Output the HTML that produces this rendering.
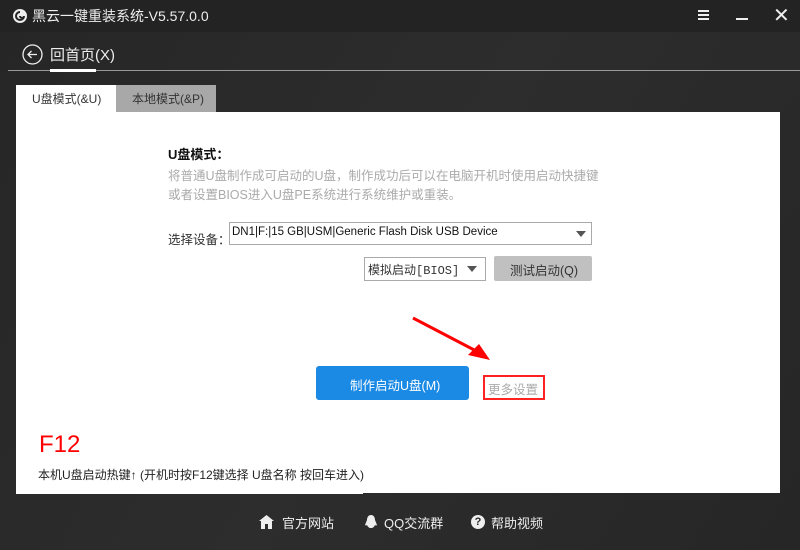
<!DOCTYPE html>
<html><head><meta charset="utf-8"><style>
*{margin:0;padding:0;box-sizing:border-box}
body{width:800px;height:550px;overflow:hidden;background:#2a2a2a;font-family:"Liberation Sans","Noto Sans CJK SC",sans-serif;position:relative;color:#333}
.a{position:absolute}
.t{font-size:13px;white-space:nowrap}
</style></head><body>
<div class="a" style="left:0;top:0;width:800px;height:550px;background:linear-gradient(120deg,#262626 0%,#2d2d2d 50%,#262626 100%)"></div>
<div class="a" style="left:0;top:0;width:800px;height:32px;background:#232323"></div>
<svg class="a" style="left:12px;top:8px" width="16" height="16" viewBox="0 0 16 16"><circle cx="8" cy="8" r="7" fill="#eee"/><path d="M8 4a4 4 0 1 0 4 4 2 2 0 0 1-4 0" fill="none" stroke="#232323" stroke-width="2"/></svg>
<div class="a t" style="left:32px;top:6px;color:#eee;font-size:14px">黑云一键重装系统-V5.57.0.0</div>
<div class="a" style="left:698px;top:10px;width:11px;height:2px;background:#eee;box-shadow:0 4px 0 #eee,0 8px 0 #eee"></div>
<div class="a" style="left:736px;top:18px;width:12px;height:2px;background:#eee"></div>
<div class="a t" style="left:773px;top:3px;color:#eee;font-size:20px">✕</div>
<svg class="a" style="left:22px;top:44px" width="21" height="21" viewBox="0 0 21 21"><circle cx="10.5" cy="10.5" r="9.5" fill="none" stroke="#eee" stroke-width="1.3"/><path d="M15 10.5H6M9.5 7L6 10.5 9.5 14" fill="none" stroke="#eee" stroke-width="1.3"/></svg>
<div class="a t" style="left:50px;top:44px;color:#eee;font-size:15px">回首页(X)</div>
<div class="a" style="left:8px;top:70px;width:792px;height:1px;background:#999"></div>
<div class="a" style="left:50px;top:69px;width:46px;height:3px;background:#fff"></div>
<div class="a" style="left:16px;top:85px;width:100px;height:28px;background:#fff"></div>
<div class="a t" style="left:32px;top:90px;font-size:12px">U盘模式(&amp;U)</div>
<div class="a" style="left:116px;top:85px;width:100px;height:27px;background:#a8a8a8"></div>
<div class="a t" style="left:132px;top:90px;font-size:12px">本地模式(&amp;P)</div>
<div class="a" style="left:16px;top:112px;width:764px;height:381px;background:#fff"></div>
<div class="a" style="left:16px;top:490px;width:347px;height:4px;background:#fff"></div>
<div class="a t" style="left:168px;top:144px;font-weight:bold;color:#111">U盘模式：</div>
<div class="a t" style="left:168px;top:167px;color:#aaa;font-size:12.5px;line-height:19px">将普通U盘制作成可启动的U盘，制作成功后可以在电脑开机时使用启动快捷键<br>或者设置BIOS进入U盘PE系统进行系统维护或重装。</div>
<div class="a t" style="left:168px;top:229px;font-size:12.5px">选择设备：</div>
<div class="a" style="left:229px;top:222px;width:363px;height:23px;border:1px solid #aaa"></div>
<div class="a t" style="left:232px;top:226px;font-size:11.5px;color:#111">DN1|F:|15 GB|USM|Generic Flash Disk USB Device</div>
<div class="a" style="left:576px;top:231px;border:5px solid transparent;border-top:6px solid #555"></div>
<div class="a" style="left:364px;top:257px;width:122px;height:24px;border:1px solid #aaa"></div>
<div class="a t" style="left:368px;top:261px;font-size:12px;font-family:'Liberation Mono','Noto Sans CJK SC',monospace">模拟启动[BIOS]</div>
<div class="a" style="left:467px;top:266px;border:5px solid transparent;border-top:6px solid #555"></div>
<div class="a" style="left:494px;top:256px;width:98px;height:25px;background:#c0c0c0;border-radius:2px"></div>
<div class="a t" style="left:510px;top:260px;font-size:12.5px">测试启动(Q)</div>
<svg class="a" style="left:410px;top:315px" width="90" height="50" viewBox="0 0 90 50"><path d="M3 3L70 38" stroke="#f00" stroke-width="3"/><path d="M80 45L58 40 69 29Z" fill="#f00"/></svg>
<div class="a" style="left:316px;top:366px;width:153px;height:34px;background:#1a8ae5;border-radius:3px"></div>
<div class="a t" style="left:350px;top:375px;color:#fff;font-size:12.5px">制作启动U盘(M)</div>
<div class="a" style="left:483px;top:375px;width:62px;height:25px;border:2px solid #f22"></div>
<div class="a t" style="left:488px;top:379px;color:#aaa;font-size:12.5px">更多设置</div>
<div class="a t" style="left:39px;top:431px;color:#f00;font-size:24px">F12</div>
<div class="a t" style="left:38px;top:466px;font-size:12px;color:#222">本机U盘启动热键↑ (开机时按F12键选择 U盘名称 按回车进入)</div>
<svg class="a" style="left:259px;top:515px" width="15" height="14" viewBox="0 0 15 14"><path d="M7.5 0L0 6h2v8h4V9h3v5h4V6h2z" fill="#eee"/></svg>
<div class="a t" style="left:282px;top:513px;color:#eee;font-size:13px">官方网站</div>
<svg class="a" style="left:364px;top:514px" width="14" height="16" viewBox="0 0 14 16"><path d="M7 1C4 1 3 4 3 6L1 11c1 1 2 0 2 0 1 2 2 3 4 3s3-1 4-3c0 0 1 1 2 0L11 6c0-2-1-5-4-5z" fill="#eee"/></svg>
<div class="a t" style="left:384px;top:513px;color:#eee;font-size:13px">QQ交流群</div>
<div class="a" style="left:471px;top:515px;width:14px;height:14px;border-radius:50%;background:#eee;color:#2a2a2a;font-size:11px;font-weight:bold;text-align:center;line-height:14px">?</div>
<div class="a t" style="left:491px;top:513px;color:#eee;font-size:13px">帮助视频</div>
</body></html>
